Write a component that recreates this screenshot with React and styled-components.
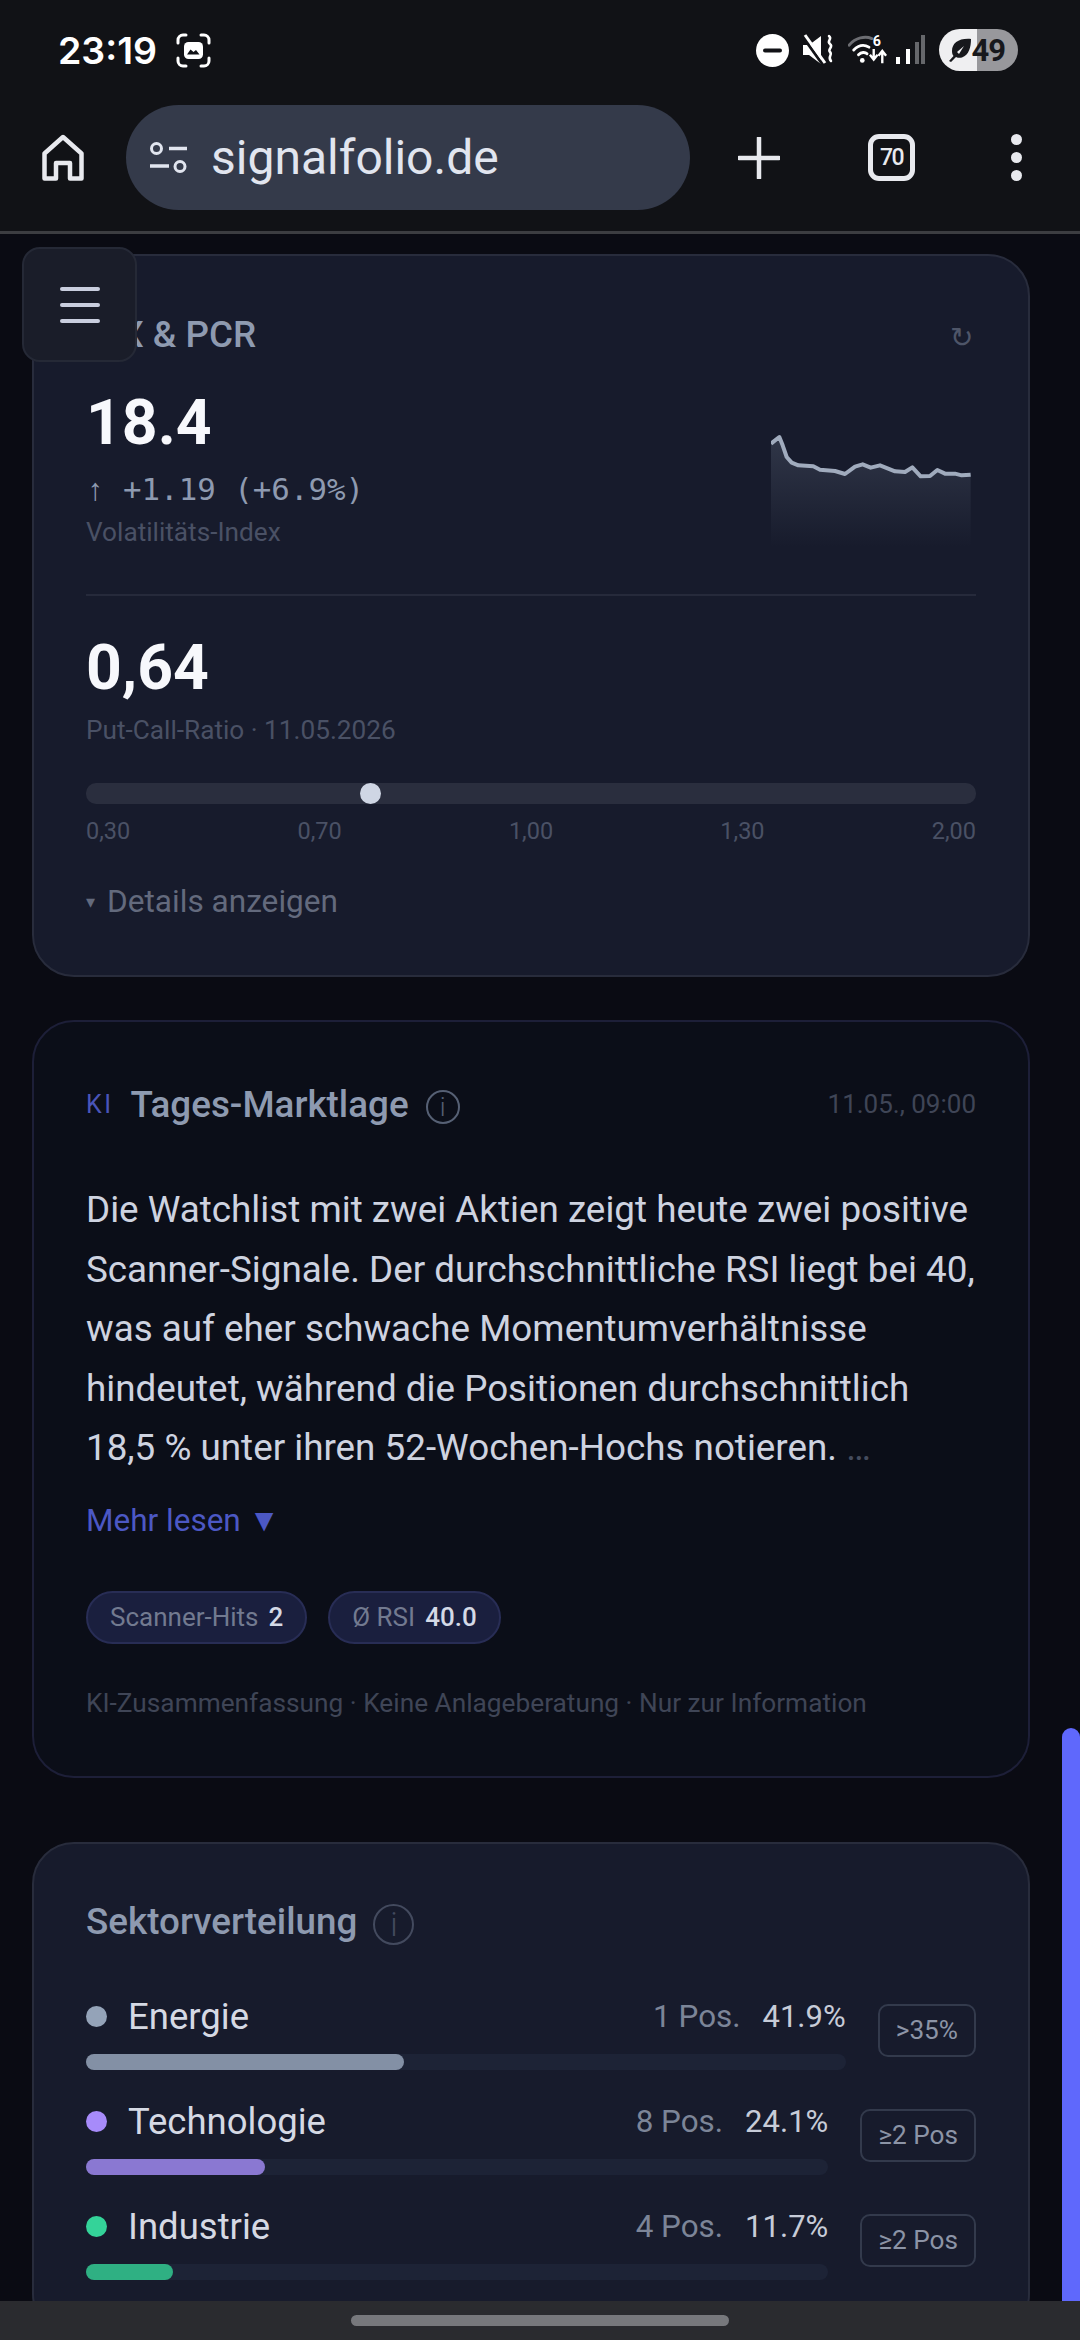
import styled, {createGlobalStyle} from "styled-components"

const GlobalStyle = createGlobalStyle`
	html, body {
		margin: 0;
		padding: 0;
		background: #0a0b13;
	}
	* {
		box-sizing: border-box;
	}
`

const Page = styled.div`
	display: flex;
	flex-direction: column;
	width: 1080px;
	height: 2340px;
	overflow: hidden;
	font-family: Roboto, "Liberation Sans", sans-serif;
	background: #0a0b13;
`
const Header = styled.header`
	height: 234px;
	flex-shrink: 0;
	background: #111216;
	border-bottom: 3px solid #3c3d41;
`
const StatusBar = styled.div`
	display: flex;
	align-items: center;
	height: 100px;
	padding: 0 62px 0 58px;
`
const Time = styled.span`
	font-family: Inter, Roboto, sans-serif;
	font-size: 37.500px;
	font-weight: 600;
	color: #fff;
	margin-right: 19px;
`
const StatusIcons = styled.div`
	display: flex;
	align-items: center;
	margin-left: auto;
	gap: 14px;
`
const Battery = styled.div`
	position: relative;
	display: flex;
	align-items: center;
	justify-content: flex-end;
	width: 79px;
	height: 42px;
	padding-right: 13px;
	border-radius: 21px;
	overflow: hidden;
	background: linear-gradient(90deg, #efeff1 0 48%, #98989c 48% 100%);
	font-size: 31px;
	font-weight: 700;
	letter-spacing: -1px;
	color: #17181c;
`
const LeafIcon = styled.svg`
	position: absolute;
	left: 8px;
	top: 8px;
`
const SignalSvg = styled.svg`
	margin-left: -6px;
`
const Toolbar = styled.div`
	display: flex;
	align-items: center;
	height: 105px;
	margin-top: 5px;
	padding-left: 42px;
`
const UrlPill = styled.div`
	display: flex;
	align-items: center;
	width: 564px;
	height: 105px;
	margin-left: 42px;
	padding-left: 24px;
	border-radius: 53px;
	background: #343a4a;
`
const UrlText = styled.span`
	margin-left: 24px;
	font-size: 48px;
	color: #e1e5ef;
`
const PlusWrap = styled.div`
	display: flex;
	margin-left: 48px;
`
const TabCount = styled.div`
	display: flex;
	align-items: center;
	justify-content: center;
	width: 47px;
	height: 47px;
	margin-left: 88px;
	border: 5px solid #e8e9ee;
	border-radius: 11px;
	font-size: 23px;
	font-weight: 500;
	letter-spacing: -1.5px;
	color: #e8e9ee;
`
const MenuDots = styled.div`
	display: flex;
	flex-direction: column;
	gap: 7px;
	margin-left: 96px;
`
const Dot = styled.span`
	width: 11px;
	height: 11px;
	border-radius: 50%;
	background: #e8e9ee;
`
const Viewport = styled.main`
	position: relative;
	flex: 1;
	min-height: 0;
	overflow: hidden;
	padding: 20px 50px 0 32px;
`
const MenuButton = styled.button`
	position: absolute;
	left: 22px;
	top: 13px;
	display: flex;
	flex-direction: column;
	align-items: center;
	justify-content: center;
	gap: 12px;
	width: 115px;
	height: 115px;
	border: 2px solid #252936;
	border-radius: 18px;
	background: #1a1d29;
`
const MenuLine = styled.span`
	width: 40px;
	height: 4px;
	border-radius: 2px;
	background: #c9cede;
`
const ScrollThumb = styled.div`
	position: absolute;
	right: 0;
	top: 1494px;
	bottom: 0;
	width: 18px;
	border-radius: 9px 9px 0 0;
	background: #5f68fc;
`
const Card = styled.section`
	margin-top: ${p => p.$top || 0}px;
	padding: ${p => p.$padTop}px 52px ${p => p.$padBottom}px;
	border: 2px solid ${p => (p.$dark ? "#1d1f38" : "#282c3c")};
	border-radius: 42px;
	background: ${p => (p.$dark ? "#0b0e18" : "#171b2c")};
`
const CardHead = styled.div`
	display: flex;
	align-items: center;
	justify-content: space-between;
	height: 48px;
`
const TitleGroup = styled.div`
	display: flex;
	align-items: center;
`
const Title = styled.h2`
	margin: 0;
	font-size: 36.800px;
	font-weight: 500;
	color: #8e9ab0;
`
const Refresh = styled.span`
	margin-right: 3px;
	margin-top: 6px;
	font-family: "DejaVu Sans", sans-serif;
	font-size: 28px;
	font-weight: 300;
	color: #4e5568;
`
const VixRow = styled.div`
	display: flex;
	justify-content: space-between;
	align-items: flex-end;
`
const BigValue = styled.div`
	margin-top: ${p => p.$top}px;
	font-size: 62.500px;
	line-height: 64px;
	font-weight: 700;
	color: #f7f8fc;
`
const Delta = styled.div`
	height: 40px;
	margin-top: 14px;
	font-family: "DejaVu Sans Mono", monospace;
	font-size: 30.800px;
	line-height: 40px;
	color: #8e9ab0;
`
const DeltaArrow = styled.span`
	font-family: "Liberation Mono", monospace;
`
const Caption = styled.div`
	margin-top: ${p => p.$top}px;
	font-size: 26.200px;
	line-height: 32px;
	color: #4a5165;
`
const Spark = styled.svg`
	margin: 0 5px 1px 0;
`
const Divider = styled.hr`
	height: 2px;
	margin: 46px 0 0;
	border: 0;
	background: #262a3b;
`
const Track = styled.div`
	position: relative;
	height: 21px;
	margin-top: 37px;
	border-radius: 10px;
	background: #2a2e3e;
`
const Thumb = styled.span`
	position: absolute;
	top: 0;
	width: 21px;
	height: 21px;
	border-radius: 50%;
	background: #cfd6e4;
`
const Scale = styled.div`
	display: flex;
	justify-content: space-between;
	margin-top: 12px;
	font-size: 23.500px;
	line-height: 30px;
	color: #4a5165;
`
const DetailsToggle = styled.div`
	display: flex;
	align-items: center;
	margin-top: 37px;
	font-size: 31.600px;
	line-height: 38px;
	color: #636a7d;
`
const Caret = styled.span`
	margin-right: 12px;
	font-family: "DejaVu Sans", sans-serif;
	font-size: 18px;
`
const KiTag = styled.span`
	margin-right: 17px;
	font-size: 25px;
	letter-spacing: 2.500px;
	color: #4a55b8;
`
const InfoIcon = styled.span`
	display: flex;
	align-items: center;
	justify-content: center;
	width: ${p => p.$size}px;
	height: ${p => p.$size}px;
	margin: 6px 0 0 ${p => p.$left}px;
	border: 2.500px solid ${p => p.$line};
	border-radius: 50%;
	font-size: ${p => p.$size - 8}px;
	font-weight: 300;
	color: ${p => p.$line};
`
const Stamp = styled.span`
	font-size: 26px;
	color: #3f4556;
`
const Summary = styled.p`
	margin: 52px 0 0;
	font-size: 36.800px;
	line-height: 59.500px;
	color: #ced3e0;
`
const Ellipsis = styled.span`
	color: #454c5e;
`
const MoreLink = styled.div`
	margin-top: 24px;
	font-size: 31.500px;
	line-height: 38px;
	color: #4c58c4;
`
const ChipRow = styled.div`
	display: flex;
	gap: 21px;
	margin-top: 51px;
`
const Chip = styled.div`
	display: flex;
	align-items: center;
	gap: 10px;
	height: 53px;
	padding: 0 22px;
	border: 2px solid #282d55;
	border-radius: 27px;
	background: #1a1f3e;
	font-size: 26px;
	color: #727a90;
`
const ChipValue = styled.b`
	font-weight: 500;
	color: #d4d9e6;
`
const Disclaimer = styled.div`
	margin-top: 42px;
	font-size: 26.250px;
	line-height: 34px;
	color: #3f4556;
`
const SectorList = styled.div`
	display: flex;
	flex-direction: column;
	gap: 29px;
	margin-top: 48px;
`
const SectorRow = styled.div`
	display: flex;
	align-items: flex-start;
`
const SectorBody = styled.div`
	flex: 1;
	min-width: 0;
`
const SectorHead = styled.div`
	display: flex;
	align-items: center;
	height: 46px;
`
const SectorDot = styled.span`
	width: 21px;
	height: 21px;
	margin-right: 21px;
	border-radius: 50%;
	background: ${p => p.$color};
`
const SectorName = styled.span`
	font-size: 36.500px;
	color: #d5d9e4;
`
const SectorPos = styled.span`
	margin-left: auto;
	font-size: 31.400px;
	color: #7c8598;
`
const SectorPct = styled.span`
	margin-left: 22px;
	font-size: 31px;
	color: #c7ccd8;
`
const BarTrack = styled.div`
	height: 16px;
	margin-top: 14px;
	border-radius: 8px;
	background: #1d2336;
`
const BarFill = styled.div`
	height: 100%;
	border-radius: 8px;
	background: ${p => p.$color};
`
const LimitTag = styled.span`
	display: flex;
	align-items: center;
	height: 53px;
	margin: 10px 0 0 32px;
	padding: 0 16px;
	border: 2px solid #333a4c;
	border-radius: 10px;
	font-size: 26.200px;
	color: #8c94a6;
`
const NavBar = styled.div`
	display: flex;
	justify-content: center;
	height: 39px;
	flex-shrink: 0;
	padding-top: 14px;
	background: #2a2b2f;
`
const NavPill = styled.span`
	width: 378px;
	height: 11px;
	border-radius: 6px;
	background: #77787c;
`

const sparkPoints = "93,95 118,75 128,100 140,135 155,152 175,160 220,163 240,173 285,177 315,186 345,164 368,157 392,167 420,160 465,178 495,180 517,166 542,193 570,192 592,174 615,185 645,185 665,190 692,188"

const sectors = [
	{name: "Energie", pos: "1 Pos.", pct: 41.9, dot: "#94a3b8", bar: "#8390a5", tag: ">35%"},
	{name: "Technologie", pos: "8 Pos.", pct: 24.1, dot: "#a78bfa", bar: "#8a78d2", tag: "≥2 Pos"},
	{name: "Industrie", pos: "4 Pos.", pct: 11.7, dot: "#34d399", bar: "#2fb083", tag: "≥2 Pos"},
]

function CaptureIcon() {
	return (
		<svg width="35" height="35" viewBox="0 0 35 35" fill="none">
			<path d="M10 2H7a5 5 0 0 0-5 5v3M25 2h3a5 5 0 0 1 5 5v3M10 33H7a5 5 0 0 1-5-5v-3M25 33h3a5 5 0 0 0 5-5v-3" stroke="#fff" strokeWidth="3" strokeLinecap="round" />
			<rect x="8" y="9" width="19" height="17" rx="4.500" fill="#fff" />
			<path d="M11 21.500l3.500-5 3 2.500 2.500-2 3.500 4.500z" fill="#111216" />
		</svg>
	)
}

function DndIcon() {
	return (
		<svg width="33" height="33" viewBox="0 0 33 33">
			<circle cx="16.500" cy="16.500" r="16.500" fill="#fff" />
			<rect x="7" y="14.500" width="19" height="4" rx="2" fill="#111216" />
		</svg>
	)
}

function MuteIcon() {
	return (
		<svg width="31" height="32" viewBox="0 0 31 32" fill="none">
			<path d="M0 11h6l12-9v28L6 21H0z" fill="#fff" />
			<path d="M0 3l20 28" stroke="#111216" strokeWidth="3" />
			<path d="M2 1l20 28" stroke="#fff" strokeWidth="3" />
			<path d="M26 2c4 3-3 5 1 8s-3 5 0 8 -3 5 1 9" stroke="#fff" strokeWidth="2.500" strokeLinecap="round" />
		</svg>
	)
}

function WifiIcon() {
	return (
		<svg width="40" height="32" viewBox="0 0 42 32" fill="none">
			<path d="M1 11C8 3 18 1 25 4" stroke="#6c6d72" strokeWidth="3" strokeLinecap="round" />
			<path d="M6 16c5-5 11-6 16-3" stroke="#fff" strokeWidth="3" strokeLinecap="round" />
			<path d="M11 21c3-3 7-3 9-1" stroke="#fff" strokeWidth="3" strokeLinecap="round" />
			<circle cx="15" cy="27" r="2.500" fill="#fff" />
			<path d="M27 15v10M23 21l4 5 4-5M36 30V18M32 22l4-5 4 5" stroke="#fff" strokeWidth="2.500" />
			<text x="26" y="12" fontSize="15" fontWeight="700" fill="#fff" fontFamily="Roboto, sans-serif">6</text>
		</svg>
	)
}

function SignalIcon() {
	return (
		<SignalSvg width="29" height="30" viewBox="0 0 29 30">
			<rect x="0" y="22" width="4" height="7" fill="#fff" />
			<rect x="10" y="14" width="4" height="15" fill="#fff" />
			<rect x="19" y="7" width="4" height="22" fill="#66676b" />
			<rect x="25" y="0" width="4" height="29" fill="#66676b" />
		</SignalSvg>
	)
}

function HomeIcon() {
	return (
		<svg width="42" height="47" viewBox="0 0 42 47" fill="none">
			<path d="M2.500 44.500V19.500L21 3l18.500 16.500v25H28V29H14v15.500z" stroke="#e8e9ee" strokeWidth="4.500" strokeLinejoin="round" />
		</svg>
	)
}

function TuneIcon() {
	return (
		<svg width="37" height="32" viewBox="0 0 37 32" fill="none">
			<circle cx="6.500" cy="6.500" r="5" stroke="#e1e5ef" strokeWidth="3" />
			<path d="M19 6.500h18M0 24h19" stroke="#e1e5ef" strokeWidth="3.500" />
			<circle cx="30" cy="24.500" r="5" stroke="#e1e5ef" strokeWidth="3" />
		</svg>
	)
}

function PlusIcon() {
	return (
		<svg width="42" height="42" viewBox="0 0 42 42">
			<path d="M21 1v40M1 21h40" stroke="#e8e9ee" strokeWidth="4.500" strokeLinecap="round" />
		</svg>
	)
}

function App() {
	return (
		<Page>
			<GlobalStyle />
			<Header>
				<StatusBar>
					<Time>23:19</Time>
					<CaptureIcon />
					<StatusIcons>
						<DndIcon />
						<MuteIcon />
						<WifiIcon />
						<SignalIcon />
						<Battery>
							<LeafIcon width="26" height="26" viewBox="0 0 26 26">
								<path d="M24 2C12 1 5 6 5 14c0 2 .5 4 1.500 5L2 24l2 1 5-5c2 1 4 1 6 .5C22 18 24 10 24 2zM10 15l7-6-5 8z" fill="#17181c" />
							</LeafIcon>
							49
						</Battery>
					</StatusIcons>
				</StatusBar>
				<Toolbar>
					<HomeIcon />
					<UrlPill>
						<TuneIcon />
						<UrlText>signalfolio.de</UrlText>
					</UrlPill>
					<PlusWrap>
						<PlusIcon />
					</PlusWrap>
					<TabCount>70</TabCount>
					<MenuDots>
						<Dot />
						<Dot />
						<Dot />
					</MenuDots>
				</Toolbar>
			</Header>
			<Viewport>
				<Card $padTop={54} $padBottom={54}>
					<CardHead>
						<Title>VIX &amp; PCR</Title>
						<Refresh>↻</Refresh>
					</CardHead>
					<VixRow>
						<div>
							<BigValue $top={33}>18.4</BigValue>
							<Delta>
								<DeltaArrow>↑</DeltaArrow> +1.19 (+6.9%)
							</Delta>
							<Caption $top={7}>Volatilitäts-Index</Caption>
						</div>
						<Spark width="200" height="115" viewBox="93 60 600 345">
							<defs>
								<linearGradient id="sparkFill" x1="0" y1="0" x2="0" y2="1">
									<stop offset="0" stopColor="#94a3b8" stopOpacity="0.2" />
									<stop offset="1" stopColor="#94a3b8" stopOpacity="0" />
								</linearGradient>
							</defs>
							<polygon points={`${sparkPoints} 692,405 93,405`} fill="url(#sparkFill)" />
							<polyline points={sparkPoints} fill="none" stroke="#a0abbd" strokeWidth="12" strokeLinejoin="round" />
						</Spark>
					</VixRow>
					<Divider />
					<BigValue $top={40}>0,64</BigValue>
					<Caption $top={14}>Put-Call-Ratio · 11.05.2026</Caption>
					<Track>
						<Thumb style={{left: `${((370 - 86 - 10) / 890) * 100}%`}} />
					</Track>
					<Scale>
						<span>0,30</span>
						<span>0,70</span>
						<span>1,00</span>
						<span>1,30</span>
						<span>2,00</span>
					</Scale>
					<DetailsToggle>
						<Caret>▾</Caret>
						Details anzeigen
					</DetailsToggle>
				</Card>

				<Card $dark $top={43} $padTop={58} $padBottom={56}>
					<CardHead>
						<TitleGroup>
							<KiTag>KI</KiTag>
							<Title>Tages-Marktlage</Title>
							<InfoIcon $size={34} $left={17} $line="#566074">i</InfoIcon>
						</TitleGroup>
						<Stamp>11.05., 09:00</Stamp>
					</CardHead>
					<Summary>
						Die Watchlist mit zwei Aktien zeigt heute zwei positive Scanner-Signale. Der durchschnittliche RSI liegt bei 40, was auf eher schwache Momentumverhältnisse hindeutet, während die Positionen durchschnittlich 18,5 % unter ihren 52-Wochen-Hochs notieren. <Ellipsis>…</Ellipsis>
					</Summary>
					<MoreLink>Mehr lesen ▼</MoreLink>
					<ChipRow>
						<Chip>
							Scanner-Hits <ChipValue>2</ChipValue>
						</Chip>
						<Chip>
							Ø RSI <ChipValue>40.0</ChipValue>
						</Chip>
					</ChipRow>
					<Disclaimer>KI-Zusammenfassung · Keine Anlageberatung · Nur zur Information</Disclaimer>
				</Card>

				<Card $top={64} $padTop={54} $padBottom={54}>
					<CardHead>
						<TitleGroup>
							<Title>Sektorverteilung</Title>
							<InfoIcon $size={41} $left={16} $line="#434a5e">i</InfoIcon>
						</TitleGroup>
					</CardHead>
					<SectorList>
						{sectors.map(s => (
							<SectorRow key={s.name}>
								<SectorBody>
									<SectorHead>
										<SectorDot $color={s.dot} />
										<SectorName>{s.name}</SectorName>
										<SectorPos>{s.pos}</SectorPos>
										<SectorPct>{s.pct}%</SectorPct>
									</SectorHead>
									<BarTrack>
										<BarFill $color={s.bar} style={{width: `${s.pct}%`}} />
									</BarTrack>
								</SectorBody>
								<LimitTag>{s.tag}</LimitTag>
							</SectorRow>
						))}
					</SectorList>
				</Card>
				<MenuButton aria-label="Menü">
					<MenuLine />
					<MenuLine />
					<MenuLine />
				</MenuButton>
				<ScrollThumb />
			</Viewport>
			<NavBar>
				<NavPill />
			</NavBar>
		</Page>
	)
}

export default App
